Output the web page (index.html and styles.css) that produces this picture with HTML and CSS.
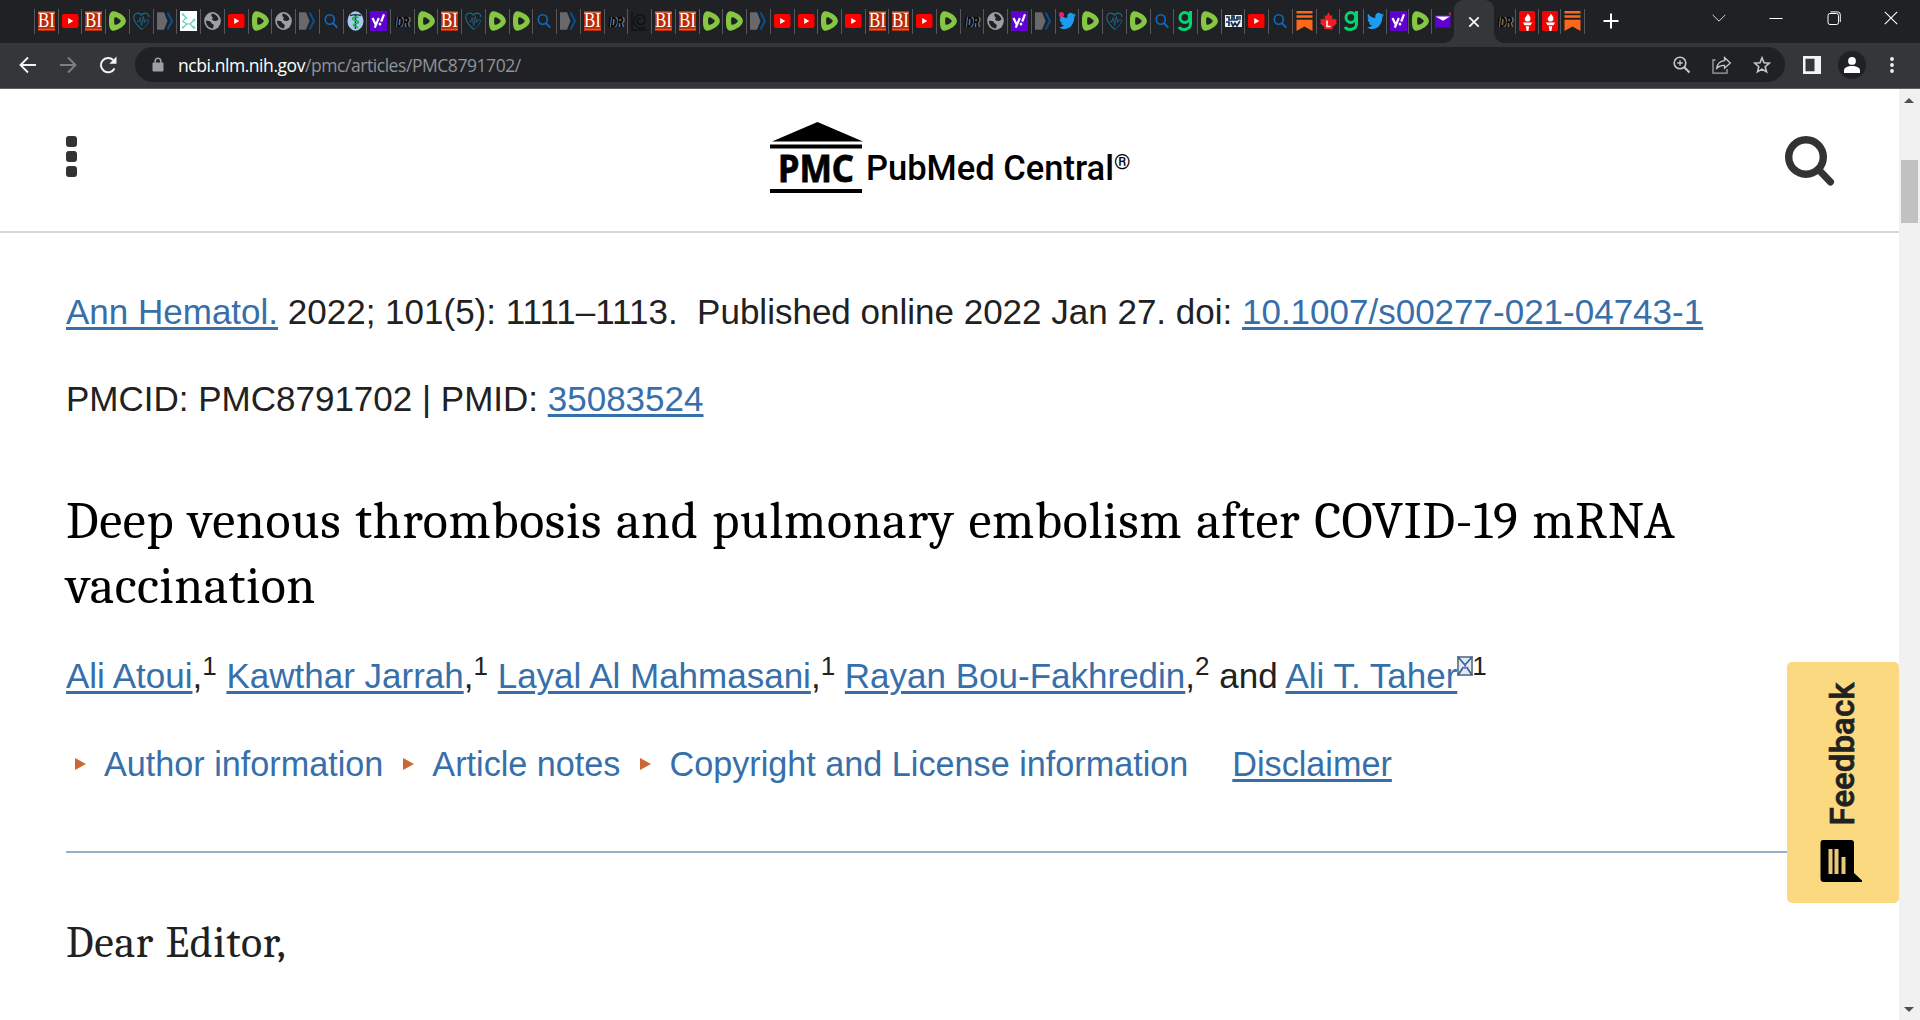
FILE: index.html
```html
<!DOCTYPE html>
<html lang="en">
<head>
    <meta charset="UTF-8">
    <meta name="viewport" content="width=device-width, initial-scale=1.0">
    <title>Deep venous thrombosis and pulmonary embolism after COVID-19 mRNA vaccination - PMC</title>
    <link rel="stylesheet" href="styles.css">
</head>
<body>
    <!-- Favicons, all on a 17x20 box -->
    <svg class="sprite" aria-hidden="true">
        <symbol id="i-bi" viewBox="0 0 17 20">
            <rect width="17" height="20" fill="#b92b05"/>
            <path d="M0 1.5h17M0 18.3h17" stroke="#d98b73" stroke-width=".7"/>
            <text x="0" y="16.4" class="fav-serif" textLength="17" lengthAdjust="spacingAndGlyphs">BI</text>
        </symbol>
        <symbol id="i-yt" viewBox="0 0 17 20">
            <rect x="0" y="3" width="16.5" height="14" rx="2" fill="#f00"/>
            <path d="M6.2 7v6l5-3z" fill="#fff"/>
        </symbol>
        <symbol id="i-rumble" viewBox="0 0 17 20">
            <path d="M3 .6C6 -.6 13 3 15.6 6.4c1.7 2.2 1.7 5 0 7.2C13 17 6 20.6 3 19.4.2 18 0 14 0 10S.2 2 3 .6z" fill="#85c742"/>
            <path d="M5.8 6.3c1.6-.5 5 1.8 5.7 3 .3.5.3.9 0 1.4-.7 1.2-4.1 3.5-5.7 3-.9-.6-.9-6.800 0-7.400z" fill="#202124"/>
        </symbol>
        <symbol id="i-heart" viewBox="0 0 17 20">
            <path d="M9 18.500C4 14.500.8 10 .8 6.500.8 1.500 6.500.8 8.500 4.300c2-3.500 7.500-2.500 7.500 1.700" fill="none" stroke="#14708c" stroke-width="1.100"/>
            <path d="M9 18.500c4-3 6-6 6.800-9" fill="none" stroke="#14557c" stroke-width="1"/>
            <path d="M4 10.500h2l1.200-4 1.500 8 1.600-9 1.300 6 1-2.500h3" fill="none" stroke="#1b6c9c" stroke-width=".8"/>
        </symbol>
        <symbol id="i-arrow" viewBox="0 0 17 20">
            <path d="M0 1.300h7l3.500 8.700L7 18.700H0z" fill="#68696c"/>
            <path d="M10.500 1.500 15 10l-4.500 8.500" fill="none" stroke="#075096" stroke-width="2"/>
        </symbol>
        <symbol id="i-net" viewBox="0 0 17 20">
            <rect width="17" height="20" fill="#fff"/>
            <path d="M3 3.500l3 3-3 4 4 2.500-4 3.500M14 9l-4 4 4 4M7 13h3" fill="none" stroke="#62cfae" stroke-width="1.200"/>
            <g fill="#7bd3df"><circle cx="3" cy="3.500" r="1.300"/><circle cx="6" cy="7" r="1.300"/><circle cx="14" cy="9" r="1.400"/><circle cx="14" cy="16.500" r="1.400"/><circle cx="3" cy="16.500" r="1.200"/></g>
        </symbol>
        <symbol id="i-globe" viewBox="0 0 17 20">
            <ellipse cx="8.500" cy="10" rx="8.300" ry="9" fill="#9aa0a6"/>
            <path d="M7.500 2.800c3-.5 6.500 2 7 5.800-1.300 1.500-4 2.200-6 .5-.8-1-.3-2 .7-2.300-1.400-.8-2.500-2.200-1.700-4zM1.900 9.800c2.800-.3 5 .4 5.300 2 .5 1.400 2.400 1 2.500 2.700.1 1.300-1 2.200-.6 3-3.900 0-7.200-3.300-7.200-7.700z" fill="#202124"/>
        </symbol>
        <symbol id="i-search" viewBox="0 0 17 20">
            <ellipse cx="6.800" cy="8.500" rx="4.500" ry="4.800" fill="none" stroke="#0d6bc4" stroke-width="1.600"/>
            <path d="M10 12.200l4.300 4.500" stroke="#0d6bc4" stroke-width="1.800"/>
        </symbol>
        <symbol id="i-staff" viewBox="0 0 17 20">
            <ellipse cx="8.500" cy="10" rx="8" ry="9.700" fill="#a5c9f0"/>
            <path d="M3 4.500c3-1 8-1 11 0M8.500 3v15" fill="none" stroke="#1b2b33" stroke-width="1.400"/>
            <path d="M11.500 6.500c-3-1-6 0-6 1.500s6 1 6 3-5 1-5 3 4.500 1 4 3" fill="none" stroke="#17b83a" stroke-width="1.600"/>
        </symbol>
        <symbol id="i-yahoo" viewBox="0 0 17 20">
            <rect width="17" height="20" fill="#6001d2"/>
            <path d="M2.500 7l3 6.200M8.800 7 4.800 16.600" stroke="#fff" stroke-width="2.200" fill="none"/>
            <path d="M14 3.300 11.200 10.500" stroke="#fff" stroke-width="2.200"/>
            <ellipse cx="10" cy="13" rx="1.400" ry="1.500" fill="#fff"/>
        </symbol>
        <symbol id="i-idr" viewBox="0 0 17 20">
            <text x="1.500" y="15.500" class="fav-slant shade" textLength="15" lengthAdjust="spacingAndGlyphs">IDR</text>
            <text x=".3" y="15.500" class="fav-slant" textLength="15" lengthAdjust="spacingAndGlyphs">IDR</text>
        </symbol>
        <symbol id="i-swirl" viewBox="0 0 17 20">
            <path d="M1 1v18h15M14 16C7 19 2 14 3 9s7-7 10-3-1 9-5 7-1-7 2-5" fill="none" stroke="#111214" stroke-width="1.400"/>
        </symbol>
        <symbol id="i-twitter" viewBox="0 0 24 24" preserveAspectRatio="none">
            <path d="M23.950 4.570a10 10 0 0 1-2.820.770 4.960 4.960 0 0 0 2.160-2.720c-.950.550-2 .950-3.130 1.180a4.920 4.920 0 0 0-8.380 4.480C7.690 8.090 4.070 6.130 1.640 3.160a4.820 4.820 0 0 0-.670 2.480c0 1.710.870 3.210 2.190 4.090a4.900 4.900 0 0 1-2.230-.610v.060a4.920 4.920 0 0 0 3.950 4.830 5 5 0 0 1-2.210.080 4.940 4.940 0 0 0 4.600 3.420A9.870 9.870 0 0 1 0 19.540a13.990 13.990 0 0 0 7.550 2.210c9.050 0 14-7.500 14-13.980 0-.210 0-.420-.020-.630a9.940 9.940 0 0 0 2.460-2.550z" fill="#1d9bf0"/>
        </symbol>
        <symbol id="i-g" viewBox="0 0 17 20">
            <ellipse cx="7.800" cy="6.500" rx="4.800" ry="4.900" fill="none" stroke="#00d56f" stroke-width="3"/>
            <path d="M13.500 0v13c0 6-9 7-11.500 3" fill="none" stroke="#00d56f" stroke-width="3"/>
        </symbol>
        <symbol id="i-news" viewBox="0 0 17 20">
            <rect y="4" width="17" height="12" fill="#e8eef2"/>
            <path d="M1 6h3v3h3V5h2v4h3V6h4M1 11h3v4M6 11l2 4 2-3 2 3 3-5M13 8h3" fill="none" stroke="#14304f" stroke-width="1.700"/>
        </symbol>
        <symbol id="i-stack" viewBox="0 0 17 20">
            <path d="M.5 0h16v2.500h-16zM.5 4.200h16v2.500h-16zM.5 8.700h16V20l-8-4.500-8 4.500z" fill="#ff6719"/>
        </symbol>
        <symbol id="i-leaf" viewBox="0 0 17 20">
            <path d="M8.500 1l2 4 2-1-.6 5 2-2 .6 1.500 2.300-.3-.8 3 1 1-4.500 4 .3 2H4.200l.3-2L0 12.200l1-1-.8-3 2.300.3L3.100 7l2 2-.6-5 2 1z" fill="#ef1c25"/>
            <path d="M7 9.500v6h3.500" fill="none" stroke="#fff" stroke-width="1.500"/>
        </symbol>
        <symbol id="i-mail" viewBox="0 0 17 20">
            <path d="M0 4h15.500v12.500H0z" fill="#6001d2"/>
            <path d="M.5 5.500h14.500l-7 4.200z" fill="#fff"/>
            <path d="M13.500 2.500l2-1.500v4z" fill="#ff2d3d"/>
        </symbol>
        <symbol id="i-torch" viewBox="0 0 17 20">
            <rect width="16" height="20" rx="1.500" fill="#f00505"/>
            <path d="M8.800 2.500c2 2.500 3 4 2.600 6-.3 1.500-1.400 2-2.900 2s-2.600-.8-2.800-2.300c-.2-2 2.600-3 3.100-5.700zM4 11.500h9l-1.500 2.800h-6zM6.800 15.200h3.400L9.400 20H7.600z" fill="#fff"/>
        </symbol>
    </svg>

    <div class="tab-strip">
        <div class="tabs" id="tabsLeft"></div>
        <div class="tab-active">
            <svg width="12" height="12" viewBox="0 0 12 12"><path d="M1.300 1.300l9.400 9.400M10.700 1.300l-9.400 9.400" stroke="#fff" stroke-width="1.700"/></svg>
        </div>
        <div class="tabs tabs-right" id="tabsRight"></div>
        <svg class="new-tab" width="16" height="16" viewBox="0 0 16 16"><path d="M8 .5v15M.5 8h15" stroke="#fff" stroke-width="2"/></svg>
        <div class="window-controls">
            <svg width="14" height="14" viewBox="0 0 14 14"><path d="M.6 3.800 7 10.200l6.400-6.400" fill="none" stroke="#d5d6d8"/></svg>
            <svg width="14" height="14" viewBox="0 0 14 14"><path d="M.5 7.500h13" stroke="#fff"/></svg>
            <svg width="14" height="14" viewBox="0 0 14 14"><rect x="1" y="2.500" width="10.500" height="11" rx="2" fill="none" stroke="#fff"/><path d="M3.500.9h7a2.700 2.700 0 0 1 2.800 2.700v7.500" fill="none" stroke="#fff"/></svg>
            <svg width="14" height="14" viewBox="0 0 14 14"><path d="M.8.8l12.400 12.400M13.200.8.8 13.200" stroke="#fff" stroke-width="1.100"/></svg>
        </div>
    </div>

    <div class="toolbar">
        <svg class="nav" width="18" height="18" viewBox="0 0 18 18"><path d="M17 9H2M9 1.500 1.500 9 9 16.500" fill="none" stroke="#f1f3f4" stroke-width="1.900"/></svg>
        <svg class="nav" width="18" height="18" viewBox="0 0 18 18"><path d="M1 9h15M9 1.500 16.500 9 9 16.500" fill="none" stroke="#7d7f83" stroke-width="1.900"/></svg>
        <svg class="nav" width="18" height="18" viewBox="0 0 18 18"><path d="M15.500 12.500A7.200 7.200 0 1 1 14.200 4" fill="none" stroke="#f1f3f4" stroke-width="2"/><path d="M17.500.6v7.200h-7.200z" fill="#f1f3f4"/></svg>
        <div class="address">
            <svg width="12" height="16" viewBox="0 0 12 16"><rect x=".5" y="5.500" width="11" height="9" rx="1" fill="#9aa0a6"/><path d="M3.200 6V4a2.800 2.800 0 0 1 5.600 0v2" fill="none" stroke="#9aa0a6" stroke-width="1.600"/></svg>
            <p class="url"><span>ncbi.nlm.nih.gov</span>/pmc/articles/PMC8791702/</p>
            <svg width="18" height="18" viewBox="0 0 18 18"><circle cx="7" cy="7" r="5.800" fill="none" stroke="#c4c6ca" stroke-width="1.600"/><path d="M11.200 11.200l5.300 5.300" stroke="#c4c6ca" stroke-width="2.200"/><path d="M7 4.300v5.400M4.300 7h5.400" stroke="#c4c6ca" stroke-width="1.300"/></svg>
            <svg width="20" height="18" viewBox="0 0 20 18"><path d="M3.500 4H1v13.200h14V13" fill="none" stroke="#a5a7ab" stroke-width="1.300"/><path d="M12.500 1.500 18.300 7l-5.800 5.200V9.300c-3.500-.2-5.700.8-7.800 3C5.200 8.500 7.800 5.200 12.500 4.700z" fill="none" stroke="#c4c6ca" stroke-width="1.300"/></svg>
            <svg width="18" height="18" viewBox="0 0 18 18"><path d="M9 1.800l2 5 5.300.4-4.100 3.500 1.300 5.200L9 13.100l-4.500 2.800 1.300-5.200-4.100-3.500L7 6.800z" fill="none" stroke="#c4c6ca" stroke-width="1.600"/></svg>
        </div>
        <svg class="panel" width="18" height="18" viewBox="0 0 18 18"><path d="M0 0h18v18H0zM2.500 2.800v12.500h9V2.800z" fill="#f1f3f4" fill-rule="evenodd"/></svg>
        <div class="avatar">
            <svg width="16" height="16" viewBox="0 0 16 16"><circle cx="8" cy="3.900" r="3.900" fill="#fff"/><path d="M0 16v-2.500C0 10.600 3.500 9 8 9s8 1.600 8 4.500V16z" fill="#fff"/></svg>
        </div>
        <svg width="4" height="16" viewBox="0 0 4 16"><g fill="#f1f3f4"><circle cx="2" cy="2" r="1.900"/><circle cx="2" cy="8" r="1.900"/><circle cx="2" cy="14" r="1.900"/></g></svg>
    </div>

    <div class="viewport">
        <div class="page">
            <header class="site-header">
                <div class="menu"><i></i><i></i><i></i></div>
                <svg class="logo" width="362" height="74" viewBox="0 0 362 74">
                    <path d="M47.500 0 93 19.500H2zM0 22.500h92v4H0zM0 67h92v4H0z"/>
                    <text x="8" y="60.200" class="logo-pmc" textLength="76" lengthAdjust="spacingAndGlyphs">PMC</text>
                    <text x="96" y="58.200" class="logo-name" textLength="248" lengthAdjust="spacingAndGlyphs">PubMed Central</text>
                    <text x="344" y="47" class="logo-reg">®</text>
                </svg>
                <svg class="site-search" width="50" height="50" viewBox="0 0 50 50"><circle cx="21" cy="21" r="17.300" fill="none" stroke="#333" stroke-width="7.400"/><path d="M34 34l11.500 12" stroke="#333" stroke-width="7" stroke-linecap="round"/></svg>
            </header>

            <article class="article">
                <p class="citation"><a href="#">Ann Hematol.</a> 2022; 101(5): 1111–1113.&nbsp; Published online 2022 Jan 27. doi:&nbsp;<a href="#">10.1007/s00277-021-04743-1</a></p>
                <p class="ids">PMCID: PMC8791702 | PMID: <a href="#">35083524</a></p>
                <h1><span class="line-one">Deep venous thrombosis and pulmonary embolism after COVID-19 mRNA</span> <span class="line-two">vaccination</span></h1>
                <p class="authors"><a href="#">Ali Atoui</a>,<sup>1</sup> <a href="#">Kawthar Jarrah</a>,<sup>1</sup> <a href="#">Layal Al Mahmasani</a>,<sup>1</sup> <a href="#">Rayan Bou-Fakhredin</a>,<sup>2</sup> and <a href="#">Ali T. Taher</a><svg class="envelope" width="16" height="20" viewBox="0 0 16 20"><rect x="1" y="1" width="14" height="18" fill="#e4e8f0" stroke="#75879a" stroke-width="2"/><path d="M1 1l7 8 7-8M1 19l5.500-8M15 19l-5.500-8" fill="none" stroke="#2f6497" stroke-width="1.700"/><path d="M8 7v6" stroke="#5a62d8" stroke-width="1.500"/></svg><sup>1</sup></p>
                <div class="notes">
                    <a class="toggle" href="#">Author information</a>
                    <a class="toggle" href="#">Article notes</a>
                    <a class="toggle" href="#">Copyright and License information</a>
                    <a class="disclaimer" href="#">Disclaimer</a>
                </div>
                <p class="greeting">Dear Editor,</p>
            </article>

            <button class="feedback" type="button">
                <svg width="112" height="241" viewBox="0 0 112 241">
                    <text transform="translate(67 163.500) rotate(-90)" textLength="143" lengthAdjust="spacingAndGlyphs">Feedback</text>
                    <path d="M36 178h28q3 0 3 3v30l8 7.500v1.500H37q-3.500 0-3.500-3.500V181q0-3 2.500-3z" fill="#000"/>
                    <path d="M43.500 187v25M49.500 187v25M56.500 195v17" stroke="#e8c878" stroke-width="4"/>
                </svg>
            </button>
        </div>

        <div class="scrollbar">
            <i class="arrow-up"></i>
            <i class="thumb"></i>
            <i class="arrow-down"></i>
        </div>
    </div>

    <script>
        const left = 'bi yt bi rumble heart arrow net globe yt rumble globe arrow search staff yahoo idr ' +
            'rumble bi heart rumble rumble search arrow bi idr swirl bi bi rumble rumble arrow yt yt ' +
            'rumble yt bi bi yt rumble idr globe yahoo arrow twitter! rumble heart rumble search g ' +
            'rumble news yt search stack leaf g twitter yahoo rumble mail';
        const right = 'idr torch torch stack';

        function fillTabs(id, names) {
            document.getElementById(id).innerHTML = names.split(' ').map(name => {
                const unread = name.endsWith('!');
                return `<div class="tab${unread ? ' unread' : ''}"><svg width="17" height="20"><use href="#i-${name.replace('!', '')}"/></svg></div>`;
            }).join('');
        }

        fillTabs('tabsLeft', left);
        fillTabs('tabsRight', right);
    </script>
</body>
</html>
```
FILE: styles.css
```css
* {
    margin: 0;
    padding: 0;
    box-sizing: border-box;
}

body {
    width: 1920px;
    height: 1020px;
    overflow: hidden;
    display: flex;
    flex-direction: column;
    background: #fff;
    font-family: Arial, "Liberation Sans", sans-serif;
    color: #212121;
}

svg {
    display: block;
    flex: none;
}

.sprite {
    display: none;
}

.fav-serif {
    font: 20px "Liberation Serif", serif;
    fill: #fff;
}

.fav-slant {
    font: italic bold 15px "Liberation Sans", sans-serif;
    fill: #050606;
}

.fav-slant.shade {
    fill: #85878a;
}

/* Browser tabs */
.tab-strip {
    height: 43px;
    flex: none;
    display: flex;
    align-items: flex-start;
    padding-left: 34px;
    background: #202124;
}

.tabs {
    display: flex;
    width: 1420px;
    padding-top: 9px;
}

.tab {
    width: 23.74px;
    height: 25px;
    flex: none;
    padding: 2px 0 0 3px;
    border-left: 1px solid #55575a;
    position: relative;
}

.tab:nth-child(n+57) {
    width: 22.5px;
}

.tab.unread::after {
    content: "";
    position: absolute;
    left: 3px;
    top: 3px;
    width: 5px;
    height: 5px;
    border-radius: 50%;
    background: #f2187c;
}

.tab-active {
    width: 40px;
    height: 43px;
    display: flex;
    align-items: center;
    justify-content: center;
    background: #35363a;
    border-radius: 9px 9px 0 0;
    position: relative;
}

/* Curved feet on both sides of the active tab */
.tab-active::before,
.tab-active::after {
    content: "";
    position: absolute;
    bottom: 0;
    width: 10px;
    height: 10px;
}

.tab-active::before {
    left: -10px;
    background: radial-gradient(circle at 0 0, #202124 9.5px, #35363a 10px);
}

.tab-active::after {
    right: -10px;
    background: radial-gradient(circle at 100% 0, #202124 9.5px, #35363a 10px);
}

.tabs-right {
    width: 91px;
}

.tabs-right .tab {
    width: 22.7px;
}

.tabs-right .tab:first-child {
    border-color: transparent;
    padding-left: 2px;
    width: 21px;
}

.tabs-right .tab:last-child {
    border-right: 1px solid #55575a;
    width: 24.5px;
}

.new-tab {
    margin: 13px 0 0 18px;
}

.window-controls {
    display: flex;
    gap: 43.3px;
    margin: 11px 0 0 93px;
}

/* Address bar */
.toolbar {
    height: 46px;
    flex: none;
    display: flex;
    align-items: center;
    padding: 0 22px 2px 19px;
    background: #35363a;
    border-bottom: 1px solid #5f6062;
}

.nav {
    margin-right: 22px;
}

.address {
    width: 1650px;
    height: 35px;
    margin-left: -4px;
    display: flex;
    align-items: center;
    gap: 21px;
    padding: 0 14px 0 17px;
    background: #202124;
    border-radius: 18px;
}

.url {
    flex: 1;
    margin-left: -7px;
    font: 17.5px/24px "Segoe UI", "Open Sans", sans-serif;
    letter-spacing: -.44px;
    color: #8f9398;
    white-space: nowrap;
}

.url span {
    color: #fff;
}

.panel {
    margin-left: 18px;
}

.avatar {
    width: 28px;
    height: 28px;
    margin: 0 24px 0 17px;
    display: flex;
    align-items: center;
    justify-content: center;
    border-radius: 50%;
    background: #202124;
}

/* Page */
.viewport {
    flex: 1;
    display: flex;
    min-height: 0;
}

.page {
    width: 1899px;
    position: relative;
    overflow: hidden;
}

.site-header {
    height: 144px;
    display: flex;
    align-items: flex-start;
    justify-content: space-between;
    padding: 0 64px 0 66px;
    border-bottom: 2px solid #d6d6d6;
}

.menu {
    display: flex;
    flex-direction: column;
    gap: 4px;
    margin-top: 47px;
}

.menu i {
    width: 11px;
    height: 11px;
    border-radius: 3px;
    background: #333;
}

.logo {
    margin: 33px 0 0 40px;
}

.logo-pmc {
    font: bold 38px "Noto Sans", sans-serif;
    stroke: #000;
    stroke-width: .8px;
}

.logo-name {
    font: 500 35px Roboto, sans-serif;
}

.logo-reg {
    font: 500 21px Roboto, sans-serif;
}

.site-search {
    margin-top: 47px;
}

.article {
    padding: 57px 66px 0;
    font-size: 35px;
    line-height: 44px;
    white-space: nowrap;
}

a {
    color: #376faa;
    text-decoration: underline;
    text-decoration-thickness: 3px;
    text-underline-offset: 3px;
}

.citation {
    margin-bottom: 43px;
}

.ids {
    margin-bottom: 68px;
}

h1 {
    margin-bottom: 35px;
    font: 52px/65px Cambria, Caladea, "Liberation Serif", serif;
    color: #000;
}

h1 span {
    display: block;
}

.line-one {
    letter-spacing: .7px;
    word-spacing: 1.7px;
}

.line-two {
    letter-spacing: .45px;
}

.authors {
    margin-bottom: 44px;
}

sup {
    font-size: 26px;
    line-height: 0;
    vertical-align: 13px;
}

.envelope {
    display: inline-block;
    vertical-align: 12px;
    margin-right: -1px;
}

.notes {
    display: flex;
    height: 111px;
    border-bottom: 2px solid #97b0c8;
    font-size: 34.2px;
}

.toggle {
    margin-right: 11px;
    text-decoration: none;
}

.toggle::before {
    content: "";
    display: inline-block;
    margin: 0 18px 6px 9px;
    border-left: 11px solid #cc6633;
    border-top: 6px solid transparent;
    border-bottom: 6px solid transparent;
}

.disclaimer {
    margin-left: 33px;
}

.greeting {
    margin-top: 60px;
    font: 44px/60px Cambria, Caladea, "Liberation Serif", serif;
    letter-spacing: .75px;
    word-spacing: 1px;
}

.feedback {
    position: absolute;
    right: 0;
    top: 573px;
    border: 0;
    border-radius: 5px;
    background: #fbd980;
}

.feedback text {
    font: 500 34px Roboto, sans-serif;
    fill: #212121;
    stroke: #212121;
    stroke-width: .7px;
}

.scrollbar {
    width: 21px;
    display: flex;
    flex-direction: column;
    align-items: center;
    padding: 9px 1px 8px 0;
    background: #f1f1f1;
}

.arrow-up,
.arrow-down {
    border-left: 5px solid transparent;
    border-right: 5px solid transparent;
}

.arrow-up {
    border-bottom: 5px solid #505050;
}

.arrow-down {
    margin-top: auto;
    border-top: 5px solid #505050;
}

.thumb {
    width: 17px;
    height: 63px;
    margin-top: 57px;
    background: #c1c1c1;
}
```
